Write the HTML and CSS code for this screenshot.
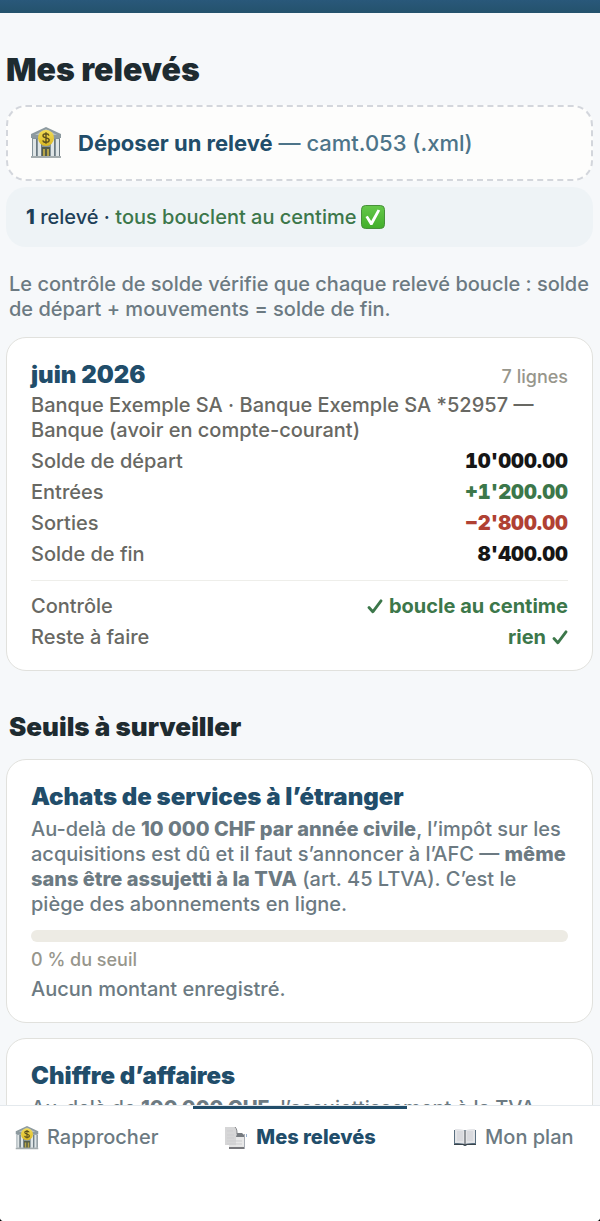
FILE: index.html
```html
<!DOCTYPE html>
<html lang="fr">
<head>
<meta charset="utf-8">
<meta name="viewport" content="width=device-width, initial-scale=1">
<title>Mes relevés</title>
<link rel="stylesheet" href="styles.css">
</head>
<body>
<svg class="defs" aria-hidden="true">
  <defs>
    <linearGradient id="gold" x2="0" y2="1"><stop stop-color="#f3dc55"/><stop offset="1" stop-color="#d9b824"/></linearGradient>
    <linearGradient id="green" x2="0" y2="1"><stop stop-color="#65c84a"/><stop offset="1" stop-color="#42ae2b"/></linearGradient>
    <symbol id="bank" viewBox="0 0 32 32">
      <path d="M16 0 31 7v4H1V7z" fill="#8d9a9f"/>
      <path d="M16 2 27 8H5z" fill="#b9c2c3"/>
      <path d="M2 11h28v18H2z" fill="#84939a"/>
      <path d="M3 12h3v17H3zM8 12h3v17H8zM21 12h3v17h-3zM26 12h3v17h-3z" fill="#dfe5e6"/>
      <path d="M6 12h1v17H6zM11 12h1v17h-1zM24 12h1v17h-1zM29 12h1v17h-1z" fill="#6b7881"/>
      <path d="M12 20h8v9h-8z" fill="#545c4a"/>
      <path d="M13 22h2v7h-2zM17 22h2v7h-2z" fill="#b5a44a"/>
      <path d="M1 29h30v2H1z" fill="#a4acae"/>
      <circle cx="16" cy="11" r="8" fill="url(#gold)"/>
      <path d="M19 8.600c-.4-1.200-1.400-1.800-3-1.800-1.800 0-3 .8-3 2 0 2.900 6.200 1.300 6.200 4.300 0 1.400-1.200 2.200-3.200 2.200-1.800 0-2.900-.7-3.200-2M16 5.300v11.400" fill="none" stroke="#5d501d" stroke-width="1.400"/>
    </symbol>
    <symbol id="page" viewBox="0 0 24 24">
      <path d="M5 8h16v13H5z" fill="#e4e4e4"/>
      <path d="M1 1h10l2 3v15H1z" fill="#d6d6d7"/>
      <path d="M12 8h8v12h-8z" fill="#e8e8e8"/>
      <path d="M5 21h16v2H5z" fill="#77777b"/>
      <path d="M20 8h1v15h-1z" fill="#a9adb5"/>
      <path d="M13 7h5l2 2v2h-8z" fill="#777b80"/>
      <path d="M11 1c2 2 2 4 2 7" fill="none" stroke="#85878a"/>
      <path d="M3 5h6M3 9h7M3 12h7M3 15h15M3 18h15" stroke="#cdcdcf"/>
      <path d="M22 8h1v3h-1z" fill="#99b2d0"/>
    </symbol>
    <symbol id="book" viewBox="0 0 24 24">
      <path d="M1 4h22v15h-9l-2 1-2-1H1z" fill="#5a6f80"/>
      <path d="M1 18h22v1h-9l-2 1-2-1H1z" fill="#39444c"/>
      <path d="M2 3c4 0 8 0 10 2v13c-3-1-6-1-10-1zM22 3c-4 0-8 0-10 2v13c3-1 6-1 10-1z" fill="#e4e5e8"/>
      <path d="M4 6h6M4 8h6M4 10h6M4 12h6M4 14h6M14 6h6M14 8h6M14 10h6M14 12h6M14 14h6" stroke="#c8cad0" stroke-width=".8"/>
      <path d="M12 5v14" stroke="#5d6268" stroke-width="1.200"/>
    </symbol>
    <symbol id="tickbox" viewBox="0 0 24 24">
      <rect x=".5" y=".5" width="23" height="23" rx="4" fill="url(#green)" stroke="#47903a"/>
      <path d="m4.500 12 2.300-1.300 3.400 5.200L16.600 4.500 19.200 5.500l-7.800 14.500H9.300z" fill="#fff"/>
    </symbol>
    <symbol id="check" viewBox="0 0 16 16">
      <path d="m2 8.500 3.800 4.300L14 1.800" fill="none" stroke="currentColor" stroke-width="2.800" stroke-linecap="round" stroke-linejoin="round"/>
    </symbol>
  </defs>
</svg>

<header class="topbar"></header>

<main class="content">
  <h1 class="title">Mes relevés</h1>
  <button class="drop" type="button">
    <svg class="drop-icon" aria-hidden="true"><use href="#bank"/></svg>
    <span><strong class="drop-strong">Déposer un relevé</strong> — camt.053 (.xml)</span>
  </button>
  <p class="banner"><span><strong class="count">1</strong> relevé · <span class="ok">tous bouclent au centime</span></span><svg class="banner-icon" aria-hidden="true"><use href="#tickbox"/></svg></p>
  <p class="intro">Le contrôle de solde vérifie que chaque relevé boucle : solde de départ + mouvements = solde de fin.</p>

  <article class="card">
    <div class="card-head"><h2 class="card-title">juin 2026</h2><span class="small">7 lignes</span></div>
    <p class="account">Banque Exemple SA · Banque Exemple SA *52957 — Banque (avoir en compte-courant)</p>
    <dl class="rows">
      <div class="row"><dt>Solde de départ</dt><dd class="amount">10'000.00</dd></div>
      <div class="row"><dt>Entrées</dt><dd class="amount plus">+1'200.00</dd></div>
      <div class="row"><dt>Sorties</dt><dd class="amount minus">−2'800.00</dd></div>
      <div class="row"><dt>Solde de fin</dt><dd class="amount">8'400.00</dd></div>
    </dl>
    <dl class="rows checks">
      <div class="row"><dt>Contrôle</dt><dd class="status"><svg class="check" aria-hidden="true"><use href="#check"/></svg>boucle au centime</dd></div>
      <div class="row"><dt>Reste à faire</dt><dd class="status">rien<svg class="check" aria-hidden="true"><use href="#check"/></svg></dd></div>
    </dl>
  </article>

  <h2 class="section">Seuils à surveiller</h2>

  <article class="card">
    <h3 class="card-title">Achats de services à l’étranger</h3>
    <p class="text">Au-delà de <strong>10 000 CHF par année civile</strong>, l’impôt sur les acquisitions est dû et il faut s’annoncer à l’AFC — <strong>même sans être assujetti à la TVA</strong> (art. 45 LTVA). C’est le piège des abonnements en ligne.</p>
    <div class="meter" role="progressbar" aria-label="Part du seuil atteinte" aria-valuenow="0" aria-valuemin="0" aria-valuemax="100"></div>
    <p class="small">0 % du seuil</p>
    <p class="text">Aucun montant enregistré.</p>
  </article>

  <article class="card">
    <h3 class="card-title">Chiffre d’affaires</h3>
    <p class="text">Au-delà de <strong>100 000 CHF</strong>, l’assujettissement à la TVA</p>
  </article>
</main>

<nav class="tabs">
  <div class="tab-list">
    <a class="tab" href="#rapprocher"><svg class="tab-icon" aria-hidden="true"><use href="#bank"/></svg>Rapprocher</a>
    <a class="tab active" href="#releves" aria-current="page"><svg class="tab-icon" aria-hidden="true"><use href="#page"/></svg>Mes relevés</a>
    <a class="tab" href="#plan"><svg class="tab-icon" aria-hidden="true"><use href="#book"/></svg>Mon plan</a>
  </div>
</nav>
</body>
</html>
```
FILE: styles.css
```css
* { box-sizing: border-box; margin: 0; padding: 0; }
html { background: #000; }
body {
  display: flex;
  flex-direction: column;
  height: 100vh;
  overflow: hidden;
  border-radius: 0 0 4px 4px;
  background: #f6f8fa;
  color: #1e2b30;
  font: 500 20px/25px Inter, "Noto Sans", sans-serif;
}
.defs { position: absolute; width: 0; height: 0; }
.topbar { flex: none; height: 13px; background: linear-gradient(#29587a, #24526c); }
.content { flex: 1; min-height: 0; overflow: hidden; padding: 38px 7px 0 6px; }
.title { font-size: 32px; line-height: 38px; font-weight: 900; margin-bottom: 16px; }

.drop {
  display: flex;
  align-items: center;
  gap: 16px;
  width: 100%;
  padding: 20px 22px;
  border: 2px dashed #d3d6dc;
  border-radius: 20px;
  background: #fdfdfc;
  color: #4d7489;
  font: inherit;
  font-size: 22px;
  line-height: 32px;
  text-align: left;
}
.drop-icon { flex: none; width: 32px; height: 32px; }
.drop-strong { color: #214d6a; font-weight: 700; }

.banner {
  display: flex;
  align-items: center;
  gap: 5px;
  margin-top: 6px;
  padding: 17px 20px;
  border-radius: 20px;
  background: #eef3f6;
  color: #1d3f58;
  line-height: 26px;
}
.count { font-weight: 800; }
.ok { color: #3c774a; }
.banner-icon { width: 24px; height: 24px; }
.intro { margin: 25px 3px 15px; color: #6c7a82; }

.card {
  margin-bottom: 15px;
  padding: 22px 24px 20px;
  border: 1px solid #e1e1dd;
  border-radius: 20px;
  background: #fff;
}
.card-head { display: flex; justify-content: space-between; align-items: baseline; }
.card-title { color: #214d6a; font-size: 24px; line-height: 30px; font-weight: 900; }
.small { color: #97968c; font-size: 18px; line-height: 24px; }
.account { margin-top: 3px; color: #686863; }
.row { display: flex; justify-content: space-between; margin-top: 6px; color: #686863; }
.amount { color: #161616; font-weight: 900; font-variant-numeric: tabular-nums; }
.plus { color: #3c774a; }
.minus { color: #b04133; }
.checks { margin-top: 13px; padding-top: 7px; border-top: 1px solid #eeeeea; }
.status { display: flex; align-items: center; gap: 6px; color: #3c774a; font-weight: 700; }
.check { width: 16px; height: 16px; }
.section { margin: 40px 3px 16px; font-size: 26px; line-height: 32px; font-weight: 900; }
.text { margin-top: 5px; color: #6c7a82; }
.text strong { font-weight: 800; }
.meter { height: 12px; margin: 13px 0 6px; border-radius: 6px; background: #edebe4; }

.tabs { flex: none; height: 116px; overflow: hidden; border-top: 1px solid #e4e9ed; background: #fff; }
.tab-list { display: grid; grid-template-columns: repeat(3, 1fr); margin: 0 -20px; }
.tab {
  display: flex;
  align-items: center;
  justify-content: center;
  gap: 8px;
  padding: 16px 0;
  border-top: 3px solid transparent;
  color: #6c7a82;
  text-decoration: none;
}
.active { border-top-color: #214d6a; color: #214d6a; font-weight: 800; }
.tab-icon { width: 24px; height: 24px; }
```
